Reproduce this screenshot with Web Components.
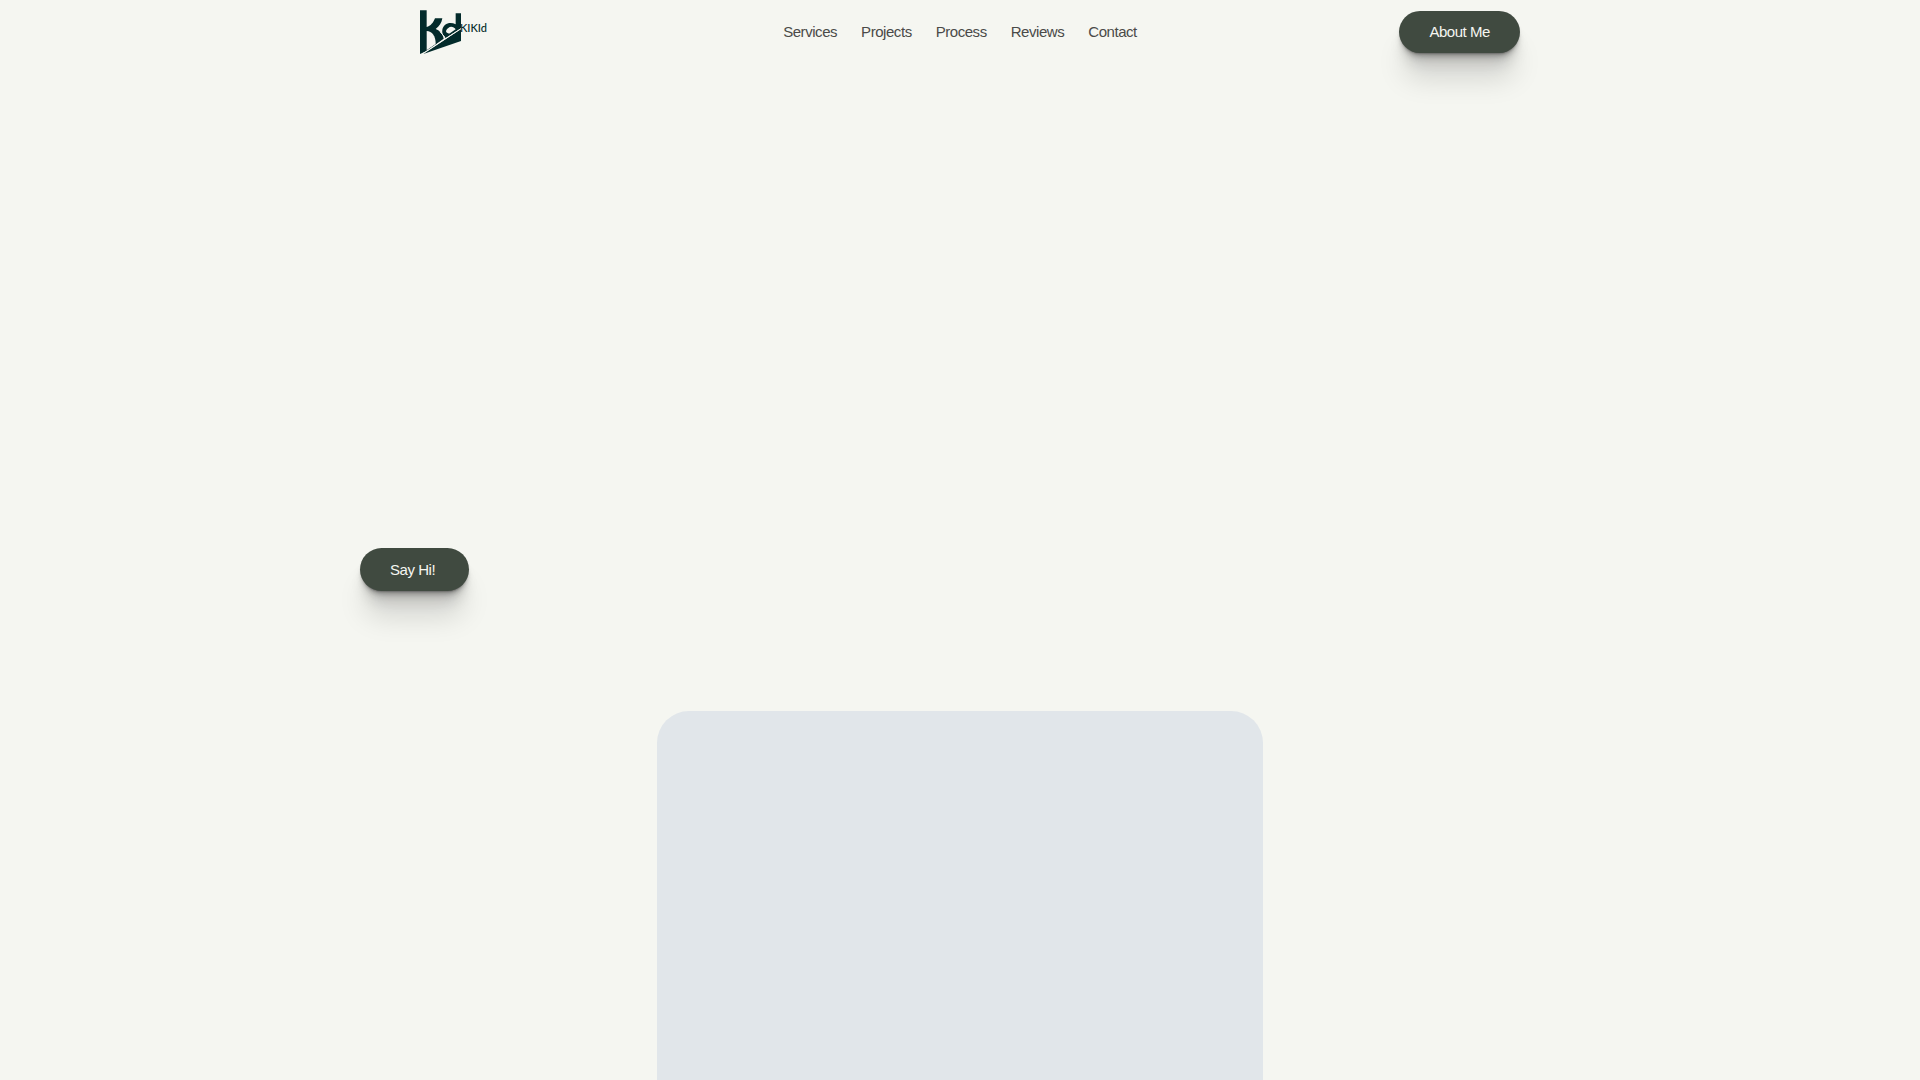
<!DOCTYPE html>
<html lang="en">
<head>
<meta charset="utf-8">
<title>KIKId</title>
<style>
  body { margin: 0; background: #f5f6f1; font-family: "Liberation Sans", Arial, sans-serif; font-size: 15px; line-height: 18px; letter-spacing: -0.03em; color: #4a4a48; }
</style>
</head>
<body>
<portfolio-page></portfolio-page>
<script>
class BaseElement extends HTMLElement {
  connectedCallback() {
    if (this.shadowRoot) return;
    this.attachShadow({ mode: "open" }).innerHTML = this.render();
  }
}

customElements.define("brand-logo", class extends BaseElement {
  render() {
    return `<style>
      :host { display: block; }
      a { display: flex; align-items: center; color: #032b2b; text-decoration: none; font: 500 11px/12px Lato, sans-serif; letter-spacing: normal; }
      svg { display: block; width: 41px; height: 44px; }
      span { margin: -8px 0 0 -1px; }
    </style>
    <a href="#home">
      <svg viewBox="30 29 123 132" fill="#032b2b" aria-hidden="true">
        <path d="M30 30H50V80C62 77 70 67 75 54H97C95 67 88 79 77 86C90 91 98 99 101 115L50 152L30 161Z"/>
        <path d="M50 92C66 93 77 106 77 131L50 150Z" fill="#f5f6f1"/>
        <path fill-rule="evenodd" d="M137 39H153V84L107 113C99 106 95 97 97 88C100 70 120 62 137 72ZM109 96C113 100 117 101 122 97L137 87C132 79 121 77 115 83C109 87 107 92 109 96Z"/>
        <path d="M90 94L104 110" stroke="#f5f6f1" stroke-width="3"/>
        <path d="M40 161L153 86V122Z"/>
        <path d="M38 160L153 85" stroke="#f5f6f1" stroke-width="3"/>
      </svg>
      <span>KIKId</span>
    </a>`;
  }
});

customElements.define("pill-button", class extends BaseElement {
  render() {
    return `<style>
      :host { display: block; width: fit-content; }
      button {
        display: block; min-width: 109px; height: var(--pill-height, 42px); padding: 0 30px; border: 0; border-radius: 22px;
        background: #404a40; color: #f5f6f1; font: inherit; letter-spacing: inherit; text-align: left; cursor: pointer;
        box-shadow: 0 1px 1px -1px rgba(0,0,0,.2), 0 2px 2px -1px rgba(0,0,0,.2), 0 4px 4px -2px rgba(0,0,0,.19),
          0 7px 7px -3px rgba(0,0,0,.18), 0 14px 14px -4px rgba(0,0,0,.15), 0 30px 28px -4px rgba(0,0,0,.13);
      }
    </style>
    <button type="button"><slot></slot></button>`;
  }
});

customElements.define("nav-link", class extends BaseElement {
  render() {
    return `<style>
      :host { display: block; }
      a { color: inherit; text-decoration: none; }
    </style>
    <a href="${this.getAttribute("href")}"><slot></slot></a>`;
  }
});

customElements.define("site-header", class extends BaseElement {
  render() {
    return `<style>
      :host { display: block; }
      header { display: grid; grid-template-columns: minmax(0, 1fr) auto minmax(0, 1fr); align-items: center; box-sizing: border-box; max-width: 1200px; height: 64px; margin: 0 auto; padding: 0 40px; }
      brand-logo { justify-self: start; margin-left: 20px; }
      pill-button { justify-self: end; }
      nav { display: flex; gap: 24px; }
    </style>
    <header>
      <brand-logo></brand-logo>
      <nav aria-label="Main">
        <nav-link href="#services">Services</nav-link>
        <nav-link href="#projects">Projects</nav-link>
        <nav-link href="#process">Process</nav-link>
        <nav-link href="#reviews">Reviews</nav-link>
        <nav-link href="#contact">Contact</nav-link>
      </nav>
      <pill-button>About Me</pill-button>
    </header>`;
  }
});

customElements.define("hero-section", class extends BaseElement {
  render() {
    return `<style>
      :host { display: flex; flex-direction: column; flex: 1; }
      .intro { width: 100%; max-width: 1200px; margin: 0 auto; padding: 484px 0 120px; --pill-height: 43px; }
      .card { flex: 1; width: 606px; max-width: 100%; margin: 0 auto; border-radius: 32px 32px 0 0; background: #e1e6ea; }
    </style>
    <div class="intro"><pill-button>Say Hi!</pill-button></div>
    <div class="card"></div>`;
  }
});

customElements.define("portfolio-page", class extends BaseElement {
  render() {
    return `<style>
      :host { display: flex; flex-direction: column; min-height: 100vh; }
      main { display: flex; flex: 1; flex-direction: column; }
    </style>
    <site-header></site-header>
    <main><hero-section></hero-section></main>`;
  }
});
</script>
</body>
</html>
